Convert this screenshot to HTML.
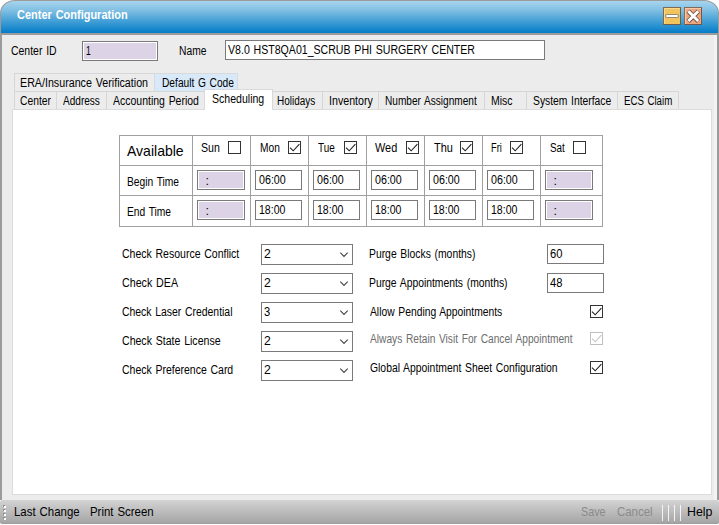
<!DOCTYPE html>
<html><head><meta charset="utf-8"><title>Center Configuration</title>
<style>
html,body{margin:0;padding:0;background:#fff;}
body{width:719px;height:525px;position:relative;overflow:hidden;font-family:"Liberation Sans", sans-serif;}
#win{position:absolute;left:0;top:0;width:719px;height:525px;overflow:hidden;}
#win div,#win span{position:absolute;box-sizing:border-box;}
.t{white-space:pre;line-height:20px;word-spacing:1px;transform-origin:0 0;color:#000;}
.cb{width:13px;height:13px;border:1px solid #333;background:#fff;}
.cb svg{position:absolute;left:-1px;top:-1px;}
.inp{border:1px solid #7a7a7a;background:#fff;}
.ro{border:1px solid #7a7a7a;background:#ddd3e6;box-shadow:inset 0 0 0 1px #fff;}
.tab{border:1px solid #d6d6d6;background:#ececec;}
.ln{background:#a0a0a0;}
</style></head><body>
<div id="win">
<div style="left:0px;top:0px;width:719px;height:500px;background:#9b9b9b;border-radius:15px 15px 0 0 / 13px 13px 0 0;"></div>
<div style="left:1px;top:1px;width:717px;height:32px;background:linear-gradient(#a7d5ee 0%,#82c0e3 28%,#44a0d6 62%,#047cc8 100%);border-radius:14px 14px 0 0 / 12px 12px 0 0;"></div>
<div style="left:2px;top:35px;width:715px;height:465px;background:#ececec;"></div>
<div style="left:714px;top:35px;width:3px;height:465px;background:#f3f3f3;"></div>
<div style="left:663px;top:7px;width:18px;height:18px;background:#f3c35d;border:1px solid #7f6c50;border-right-color:#6b5d49;border-bottom-color:#6b5d49;box-shadow:inset 1px 1px 0 #f8d88f;"><div style="left:1px;top:6px;width:14px;height:4px;background:#fff;border:1px solid rgba(100,88,66,.7);border-radius:2px;"></div></div>
<div style="left:684px;top:7px;width:18px;height:18px;background:#f0a67c;border:1px solid #846a5a;border-right-color:#6e594c;border-bottom-color:#6e594c;box-shadow:inset 1px 1px 0 #f7c9ac;"><svg width="16" height="16" viewBox="0 0 16 16" style="position:absolute;left:0;top:0"><path d="M3.2 3.1 L13.4 13.3 M13.4 3.1 L3.2 13.3" stroke="rgba(90,72,62,.85)" stroke-width="4.6" fill="none"/><path d="M3.4 3.3 L13.2 13.1 M13.2 3.3 L3.4 13.1" stroke="#fff" stroke-width="2.8" fill="none"/></svg></div>
<div class="ro" style="left:82px;top:41px;width:76px;height:20px;"></div>
<div class="inp" style="left:225px;top:40px;width:320px;height:20px;"></div>
<div class="tab" style="left:14px;top:73px;width:141px;height:19px;"></div>
<div class="tab" style="left:154px;top:73px;width:84px;height:19px;background:#d8eaf9;border-color:#d9d9d9;"></div>
<div class="tab" style="left:14px;top:91px;width:43px;height:19px;"></div>
<div class="tab" style="left:56px;top:91px;width:51px;height:19px;"></div>
<div class="tab" style="left:106px;top:91px;width:100px;height:19px;"></div>
<div class="tab" style="left:272px;top:91px;width:51px;height:19px;"></div>
<div class="tab" style="left:322px;top:91px;width:57px;height:19px;"></div>
<div class="tab" style="left:378px;top:91px;width:107px;height:19px;"></div>
<div class="tab" style="left:484px;top:91px;width:43px;height:19px;"></div>
<div class="tab" style="left:526px;top:91px;width:92px;height:19px;"></div>
<div class="tab" style="left:617px;top:91px;width:62px;height:19px;"></div>
<div style="left:12px;top:109px;width:700px;height:386px;background:#fff;border:1px solid #dcdcdc;"></div>
<div style="left:204px;top:89px;width:69px;height:21px;background:#fff;border:1px solid #d9d9d9;border-bottom:none;"></div>
<div style="left:119px;top:135px;width:484px;height:92px;border:1px solid #a0a0a0;background:#fff;"></div>
<div class="ln" style="left:119px;top:165px;width:484px;height:1px;"></div>
<div class="ln" style="left:119px;top:195px;width:484px;height:1px;"></div>
<div class="ln" style="left:192px;top:135px;width:1px;height:92px;"></div>
<div class="ln" style="left:250px;top:135px;width:1px;height:92px;"></div>
<div class="ln" style="left:308px;top:135px;width:1px;height:92px;"></div>
<div class="ln" style="left:366px;top:135px;width:1px;height:92px;"></div>
<div class="ln" style="left:424px;top:135px;width:1px;height:92px;"></div>
<div class="ln" style="left:482px;top:135px;width:1px;height:92px;"></div>
<div class="ln" style="left:540px;top:135px;width:1px;height:92px;"></div>
<div class="ro" style="left:197px;top:170px;width:48px;height:20px;"></div>
<div class="ro" style="left:197px;top:200px;width:48px;height:20px;"></div>
<div class="ro" style="left:545px;top:170px;width:48px;height:20px;"></div>
<div class="ro" style="left:545px;top:200px;width:48px;height:20px;"></div>
<div class="inp" style="left:255px;top:170px;width:47px;height:20px;"></div>
<div class="inp" style="left:255px;top:200px;width:47px;height:20px;"></div>
<div class="inp" style="left:313px;top:170px;width:47px;height:20px;"></div>
<div class="inp" style="left:313px;top:200px;width:47px;height:20px;"></div>
<div class="inp" style="left:371px;top:170px;width:47px;height:20px;"></div>
<div class="inp" style="left:371px;top:200px;width:47px;height:20px;"></div>
<div class="inp" style="left:429px;top:170px;width:47px;height:20px;"></div>
<div class="inp" style="left:429px;top:200px;width:47px;height:20px;"></div>
<div class="inp" style="left:487px;top:170px;width:47px;height:20px;"></div>
<div class="inp" style="left:487px;top:200px;width:47px;height:20px;"></div>
<div class="cb" style="left:228px;top:141px;border-color:#333"></div>
<div class="cb" style="left:288px;top:141px;border-color:#333"><svg width="13" height="13" viewBox="0 0 13 13"><path d="M2 6.6 L5.2 9.8 L11.4 3.1" fill="none" stroke="#222" stroke-width="1.1"/></svg></div>
<div class="cb" style="left:344px;top:141px;border-color:#333"><svg width="13" height="13" viewBox="0 0 13 13"><path d="M2 6.6 L5.2 9.8 L11.4 3.1" fill="none" stroke="#222" stroke-width="1.1"/></svg></div>
<div class="cb" style="left:406px;top:141px;border-color:#333"><svg width="13" height="13" viewBox="0 0 13 13"><path d="M2 6.6 L5.2 9.8 L11.4 3.1" fill="none" stroke="#222" stroke-width="1.1"/></svg></div>
<div class="cb" style="left:460px;top:141px;border-color:#333"><svg width="13" height="13" viewBox="0 0 13 13"><path d="M2 6.6 L5.2 9.8 L11.4 3.1" fill="none" stroke="#222" stroke-width="1.1"/></svg></div>
<div class="cb" style="left:510px;top:141px;border-color:#333"><svg width="13" height="13" viewBox="0 0 13 13"><path d="M2 6.6 L5.2 9.8 L11.4 3.1" fill="none" stroke="#222" stroke-width="1.1"/></svg></div>
<div class="cb" style="left:573px;top:141px;border-color:#333"></div>
<div class="inp" style="left:261px;top:244px;width:92px;height:21px;"><svg width="11" height="8" viewBox="0 0 11 8" style="position:absolute;left:77px;top:6px"><path d="M1.3 1.7 L5 5.4 L8.7 1.7" fill="none" stroke="#454545" stroke-width="1.1"/></svg></div>
<div class="inp" style="left:261px;top:273px;width:92px;height:21px;"><svg width="11" height="8" viewBox="0 0 11 8" style="position:absolute;left:77px;top:6px"><path d="M1.3 1.7 L5 5.4 L8.7 1.7" fill="none" stroke="#454545" stroke-width="1.1"/></svg></div>
<div class="inp" style="left:261px;top:302px;width:92px;height:21px;"><svg width="11" height="8" viewBox="0 0 11 8" style="position:absolute;left:77px;top:6px"><path d="M1.3 1.7 L5 5.4 L8.7 1.7" fill="none" stroke="#454545" stroke-width="1.1"/></svg></div>
<div class="inp" style="left:261px;top:331px;width:92px;height:21px;"><svg width="11" height="8" viewBox="0 0 11 8" style="position:absolute;left:77px;top:6px"><path d="M1.3 1.7 L5 5.4 L8.7 1.7" fill="none" stroke="#454545" stroke-width="1.1"/></svg></div>
<div class="inp" style="left:261px;top:360px;width:92px;height:21px;"><svg width="11" height="8" viewBox="0 0 11 8" style="position:absolute;left:77px;top:6px"><path d="M1.3 1.7 L5 5.4 L8.7 1.7" fill="none" stroke="#454545" stroke-width="1.1"/></svg></div>
<div class="inp" style="left:547px;top:244px;width:57px;height:20px;"></div>
<div class="inp" style="left:547px;top:273px;width:57px;height:20px;"></div>
<div class="cb" style="left:590px;top:305px;border-color:#333"><svg width="13" height="13" viewBox="0 0 13 13"><path d="M2 6.6 L5.2 9.8 L11.4 3.1" fill="none" stroke="#222" stroke-width="1.1"/></svg></div>
<div class="cb" style="left:590px;top:332px;border-color:#bfbfbf"><svg width="13" height="13" viewBox="0 0 13 13"><path d="M2 6.6 L5.2 9.8 L11.4 3.1" fill="none" stroke="#c6c6c6" stroke-width="1.1"/></svg></div>
<div class="cb" style="left:590px;top:361px;border-color:#333"><svg width="13" height="13" viewBox="0 0 13 13"><path d="M2 6.6 L5.2 9.8 L11.4 3.1" fill="none" stroke="#222" stroke-width="1.1"/></svg></div>
<div style="left:0px;top:500px;width:719px;height:24px;background:linear-gradient(#d3d3d3,#bcbcbc 50%,#a5a5a5);border-radius:2px;border-bottom:1px solid #9e9e9e;"></div>
<div style="left:3px;top:505px;width:2px;height:2px;background:#8e8e8e;"></div>
<div style="left:4px;top:506px;width:2px;height:2px;background:#fff;"></div>
<div style="left:3px;top:509px;width:2px;height:2px;background:#8e8e8e;"></div>
<div style="left:4px;top:510px;width:2px;height:2px;background:#fff;"></div>
<div style="left:3px;top:513px;width:2px;height:2px;background:#8e8e8e;"></div>
<div style="left:4px;top:514px;width:2px;height:2px;background:#fff;"></div>
<div style="left:3px;top:517px;width:2px;height:2px;background:#8e8e8e;"></div>
<div style="left:4px;top:518px;width:2px;height:2px;background:#fff;"></div>
<div style="left:662px;top:505px;width:1px;height:16px;background:#f4f4f4;"></div>
<div style="left:668px;top:505px;width:1px;height:16px;background:#f4f4f4;"></div>
<div style="left:674px;top:505px;width:1px;height:16px;background:#f4f4f4;"></div>
<div style="left:680px;top:505px;width:1px;height:16px;background:#f4f4f4;"></div>
<span class="t" style="left:17.49px;top:4.82px;font-size:13.5px;transform:scaleX(0.8134);color:#fff;font-weight:bold;">Center Configuration</span>
<span class="t" style="left:11.02px;top:40.67px;font-size:12.5px;transform:scaleX(0.8368);">Center ID</span>
<span class="t" style="left:179.08px;top:40.67px;font-size:12.5px;transform:scaleX(0.8220);">Name</span>
<span class="t" style="left:85.71px;top:40.67px;font-size:12.5px;transform:scaleX(0.6857);">1</span>
<span class="t" style="left:228.49px;top:39.67px;font-size:12.5px;transform:scaleX(0.8464);">V8.0 HST8QA01_SCRUB PHI SURGERY CENTER</span>
<span class="t" style="left:20.04px;top:73.17px;font-size:12.5px;transform:scaleX(0.8554);">ERA/Insurance Verification</span>
<span class="t" style="left:161.58px;top:73.17px;font-size:12.5px;transform:scaleX(0.8162);">Default G Code</span>
<span class="t" style="left:19.78px;top:90.67px;font-size:12.5px;transform:scaleX(0.8247);">Center</span>
<span class="t" style="left:63.40px;top:90.67px;font-size:12.5px;transform:scaleX(0.8044);">Address</span>
<span class="t" style="left:113.40px;top:90.67px;font-size:12.5px;transform:scaleX(0.8388);">Accounting Period</span>
<span class="t" style="left:212.27px;top:88.67px;font-size:12.5px;transform:scaleX(0.8440);">Scheduling</span>
<span class="t" style="left:277.10px;top:90.67px;font-size:12.5px;transform:scaleX(0.7978);">Holidays</span>
<span class="t" style="left:328.83px;top:90.67px;font-size:12.5px;transform:scaleX(0.8520);">Inventory</span>
<span class="t" style="left:385.34px;top:90.67px;font-size:12.5px;transform:scaleX(0.8076);">Number Assignment</span>
<span class="t" style="left:491.06px;top:90.67px;font-size:12.5px;transform:scaleX(0.8371);">Misc</span>
<span class="t" style="left:533.18px;top:90.67px;font-size:12.5px;transform:scaleX(0.8257);">System Interface</span>
<span class="t" style="left:624.42px;top:90.67px;font-size:12.5px;transform:scaleX(0.7768);">ECS Claim</span>
<span class="t" style="left:127.40px;top:141.30px;font-size:15px;transform:scaleX(0.9350);">Available</span>
<span class="t" style="left:127.18px;top:171.67px;font-size:12.5px;transform:scaleX(0.8194);">Begin Time</span>
<span class="t" style="left:127.38px;top:201.67px;font-size:12.5px;transform:scaleX(0.8191);">End Time</span>
<span class="t" style="left:201.06px;top:138.17px;font-size:12.5px;transform:scaleX(0.8482);">Sun</span>
<span class="t" style="left:259.58px;top:138.17px;font-size:12.5px;transform:scaleX(0.8156);">Mon</span>
<span class="t" style="left:318.20px;top:138.17px;font-size:12.5px;transform:scaleX(0.7951);">Tue</span>
<span class="t" style="left:375.18px;top:138.17px;font-size:12.5px;transform:scaleX(0.8714);">Wed</span>
<span class="t" style="left:433.88px;top:138.17px;font-size:12.5px;transform:scaleX(0.8732);">Thu</span>
<span class="t" style="left:490.86px;top:138.17px;font-size:12.5px;transform:scaleX(0.7373);">Fri</span>
<span class="t" style="left:549.81px;top:138.17px;font-size:12.5px;transform:scaleX(0.7889);">Sat</span>
<span class="t" style="left:258.72px;top:169.92px;font-size:12.5px;transform:scaleX(0.8545);">06:00</span>
<span class="t" style="left:259.06px;top:199.92px;font-size:12.5px;transform:scaleX(0.8437);">18:00</span>
<span class="t" style="left:316.72px;top:169.92px;font-size:12.5px;transform:scaleX(0.8545);">06:00</span>
<span class="t" style="left:317.06px;top:199.92px;font-size:12.5px;transform:scaleX(0.8437);">18:00</span>
<span class="t" style="left:374.72px;top:169.92px;font-size:12.5px;transform:scaleX(0.8545);">06:00</span>
<span class="t" style="left:375.06px;top:199.92px;font-size:12.5px;transform:scaleX(0.8437);">18:00</span>
<span class="t" style="left:432.72px;top:169.92px;font-size:12.5px;transform:scaleX(0.8545);">06:00</span>
<span class="t" style="left:433.06px;top:199.92px;font-size:12.5px;transform:scaleX(0.8437);">18:00</span>
<span class="t" style="left:490.72px;top:169.92px;font-size:12.5px;transform:scaleX(0.8545);">06:00</span>
<span class="t" style="left:491.06px;top:199.92px;font-size:12.5px;transform:scaleX(0.8437);">18:00</span>
<span class="t" style="left:205.55px;top:170.92px;font-size:12.5px;">:</span>
<span class="t" style="left:205.55px;top:200.92px;font-size:12.5px;">:</span>
<span class="t" style="left:553.55px;top:170.92px;font-size:12.5px;">:</span>
<span class="t" style="left:553.55px;top:200.92px;font-size:12.5px;">:</span>
<span class="t" style="left:121.52px;top:243.67px;font-size:12.5px;transform:scaleX(0.8404);">Check Resource Conflict</span>
<span class="t" style="left:263.92px;top:243.67px;font-size:12.5px;transform:scaleX(0.9727);">2</span>
<span class="t" style="left:121.51px;top:272.67px;font-size:12.5px;transform:scaleX(0.8548);">Check DEA</span>
<span class="t" style="left:263.92px;top:272.67px;font-size:12.5px;transform:scaleX(0.9727);">2</span>
<span class="t" style="left:121.53px;top:301.67px;font-size:12.5px;transform:scaleX(0.8328);">Check Laser Credential</span>
<span class="t" style="left:264.20px;top:301.67px;font-size:12.5px;transform:scaleX(0.8917);">3</span>
<span class="t" style="left:121.52px;top:330.67px;font-size:12.5px;transform:scaleX(0.8447);">Check State License</span>
<span class="t" style="left:263.92px;top:330.67px;font-size:12.5px;transform:scaleX(0.9727);">2</span>
<span class="t" style="left:121.52px;top:359.67px;font-size:12.5px;transform:scaleX(0.8385);">Check Preference Card</span>
<span class="t" style="left:263.92px;top:359.67px;font-size:12.5px;transform:scaleX(0.9727);">2</span>
<span class="t" style="left:369.37px;top:243.67px;font-size:12.5px;transform:scaleX(0.8285);">Purge Blocks (months)</span>
<span class="t" style="left:369.37px;top:272.67px;font-size:12.5px;transform:scaleX(0.8278);">Purge Appointments (months)</span>
<span class="t" style="left:549.93px;top:243.67px;font-size:12.5px;transform:scaleX(0.8941);">60</span>
<span class="t" style="left:550.18px;top:272.67px;font-size:12.5px;transform:scaleX(0.8923);">48</span>
<span class="t" style="left:370.20px;top:301.67px;font-size:12.5px;transform:scaleX(0.8244);">Allow Pending Appointments</span>
<span class="t" style="left:370.20px;top:329.17px;font-size:12.5px;transform:scaleX(0.8149);color:#6d6d6d;">Always Retain Visit For Cancel Appointment</span>
<span class="t" style="left:369.58px;top:357.67px;font-size:12.5px;transform:scaleX(0.8294);">Global Appointment Sheet Configuration</span>
<span class="t" style="left:13.82px;top:501.50px;font-size:13px;transform:scaleX(0.8778);">Last Change</span>
<span class="t" style="left:90.02px;top:501.50px;font-size:13px;transform:scaleX(0.8777);">Print Screen</span>
<span class="t" style="left:581.28px;top:501.50px;font-size:13px;transform:scaleX(0.8283);color:#8a8a8a;">Save</span>
<span class="t" style="left:616.54px;top:501.50px;font-size:13px;transform:scaleX(0.8800);color:#8a8a8a;">Cancel</span>
<span class="t" style="left:687.05px;top:501.50px;font-size:13px;transform:scaleX(0.9505);">Help</span>
</div>
</body></html>
